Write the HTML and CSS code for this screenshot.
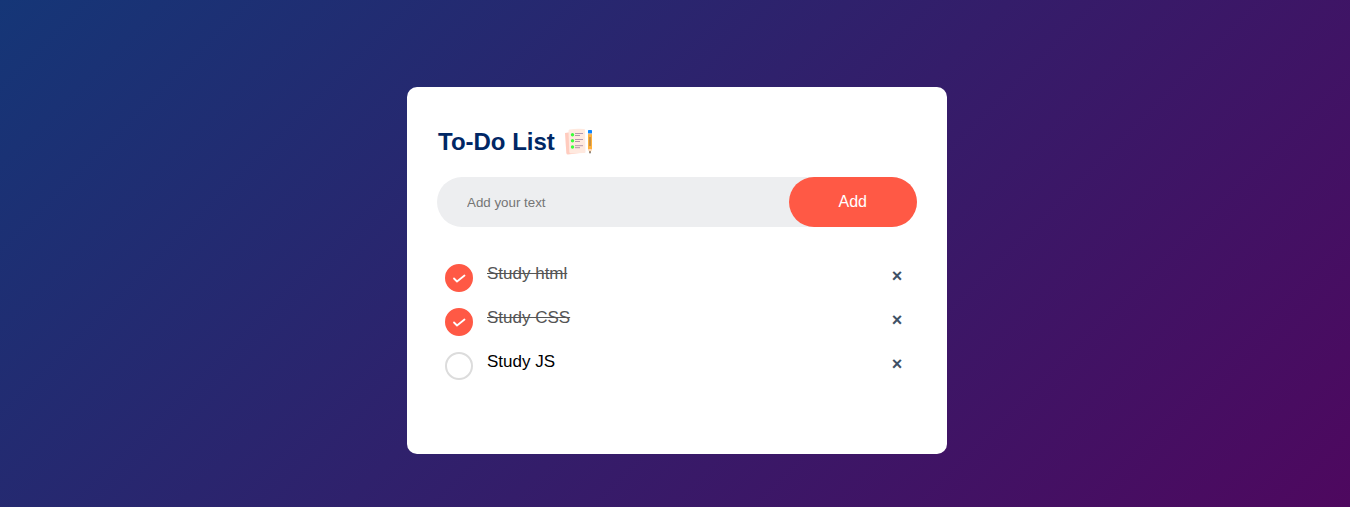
FILE: index.html
```html
<!DOCTYPE html>
<html lang="en">
<head>
<meta charset="utf-8">
<meta name="viewport" content="width=device-width, initial-scale=1">
<title>To-Do List</title>
<link rel="stylesheet" href="styles.css">
</head>
<body>
<main class="page">
  <section class="todo-app">
    <h2 class="title">To-Do List
      <svg class="title-icon" viewBox="0 0 30 30" aria-hidden="true">
        <path d="M2 6 L15 4 L20 25.500 L5 27.500 Q3.500 27.500 3.300 26Z" fill="#ffccbf"/>
        <path d="M6.500 2.500 Q13 1.500 21 2 Q22 2 22 3 L22.500 25 Q22.500 26 21.500 26 L8 26.500 Q6.500 26.500 6.300 25 L5.500 4 Q5.500 2.700 6.500 2.500Z" fill="#ffe9df"/>
        <g fill="#3cff3c"><circle cx="9.500" cy="7.700" r="1.700"/><circle cx="9.500" cy="13.800" r="1.700"/><circle cx="9.500" cy="20" r="1.700"/></g>
        <path d="M12 6.500H20M12 12.500H20M12 18.700H20" stroke="#b59aae" stroke-width="1"/>
        <path d="M12 8.500H17M12 14.500H17M12 20.700H17" stroke="#b595aa" stroke-width="1"/>
        <path d="M25 6H29V22L27 26L25 22Z" fill="#ffb03b"/>
        <path d="M25 22H29L27 26Z" fill="#ffd9bd"/>
        <path d="M26.200 24.600H27.800L27 27Z" fill="#222"/>
        <path d="M27 10V19" stroke="#8b7355" stroke-width="1"/>
        <rect x="25" y="3" width="4" height="3.500" rx=".6" fill="#0a84ff"/>
        <path d="M25 6.800H29" stroke="#b9c4d4" stroke-width="1"/>
      </svg>
    </h2>
    <form class="row">
      <input class="entry" type="text" placeholder="Add your text" aria-label="Add your text">
      <button class="add" type="button">Add</button>
    </form>
    <ul class="list">
      <li class="item">
        <input class="check" type="checkbox" id="t1" checked>
        <label class="text" for="t1">Study html</label>
        <button class="remove" type="button" aria-label="Remove Study html">×</button>
      </li>
      <li class="item">
        <input class="check" type="checkbox" id="t2" checked>
        <label class="text" for="t2">Study CSS</label>
        <button class="remove" type="button" aria-label="Remove Study CSS">×</button>
      </li>
      <li class="item">
        <input class="check" type="checkbox" id="t3">
        <label class="text" for="t3">Study JS</label>
        <button class="remove" type="button" aria-label="Remove Study JS">×</button>
      </li>
    </ul>
  </section>
</main>
</body>
</html>
```

FILE: styles.css
```css
* {
  margin: 0;
  padding: 0;
  box-sizing: border-box;
  font-family: "Liberation Sans", Arial, sans-serif;
}
.page {
  min-height: 100vh;
  padding: 87px 10px 20px 14px;
  background: linear-gradient(135deg, #153677, #4e085f);
}
.todo-app {
  max-width: 540px;
  margin: 0 auto;
  padding: 40px 30px 70px;
  background: #fff;
  border-radius: 10px;
}
.title {
  display: flex;
  align-items: center;
  gap: 8px;
  margin-bottom: 20px;
  padding-left: 1px;
  font-size: 24px;
  line-height: 30px;
  color: #002765;
}
.title-icon {
  width: 30px;
  height: 30px;
}
.row {
  display: flex;
  margin-bottom: 25px;
  background: #edeef0;
  border-radius: 30px;
}
.entry {
  flex: 1;
  min-width: 0;
  padding-left: 30px;
  border: 0;
  outline: 0;
  background: transparent;
}
.entry::placeholder {
  color: #757575;
}
.add {
  height: 50px;
  padding: 0 50px 1px;
  border: 0;
  border-radius: 40px;
  background: #ff5945;
  color: #fff;
  font-size: 16px;
  cursor: pointer;
}
.list {
  list-style: none;
}
.item {
  display: grid;
  grid-template-columns: 28px 1fr 40px;
  column-gap: 14px;
  align-items: center;
  height: 44px;
  padding-left: 8px;
  font-size: 17px;
}
.check {
  appearance: none;
  width: 28px;
  height: 28px;
  margin-top: 8px;
  border: 2px solid #dcdcdc;
  border-radius: 50%;
  cursor: pointer;
}
.check:checked {
  border-color: #ff5945;
  background: #ff5945 url("data:image/svg+xml,%3Csvg xmlns='http://www.w3.org/2000/svg' viewBox='0 0 24 24'%3E%3Cpath d='M7 12.500l3 3 7.500-6' fill='none' stroke='white' stroke-width='1.800' stroke-linecap='round' stroke-linejoin='round'/%3E%3C/svg%3E") center / 24px 24px no-repeat;
}
.text {
  line-height: 20px;
  cursor: pointer;
}
.check:checked + .text {
  color: #555;
  text-decoration: line-through;
}
.remove {
  height: 40px;
  margin-top: 4px;
  border: 0;
  background: transparent;
  color: #3f5165;
  font-size: 18px;
  font-weight: bold;
  line-height: 40px;
  cursor: pointer;
}
```
